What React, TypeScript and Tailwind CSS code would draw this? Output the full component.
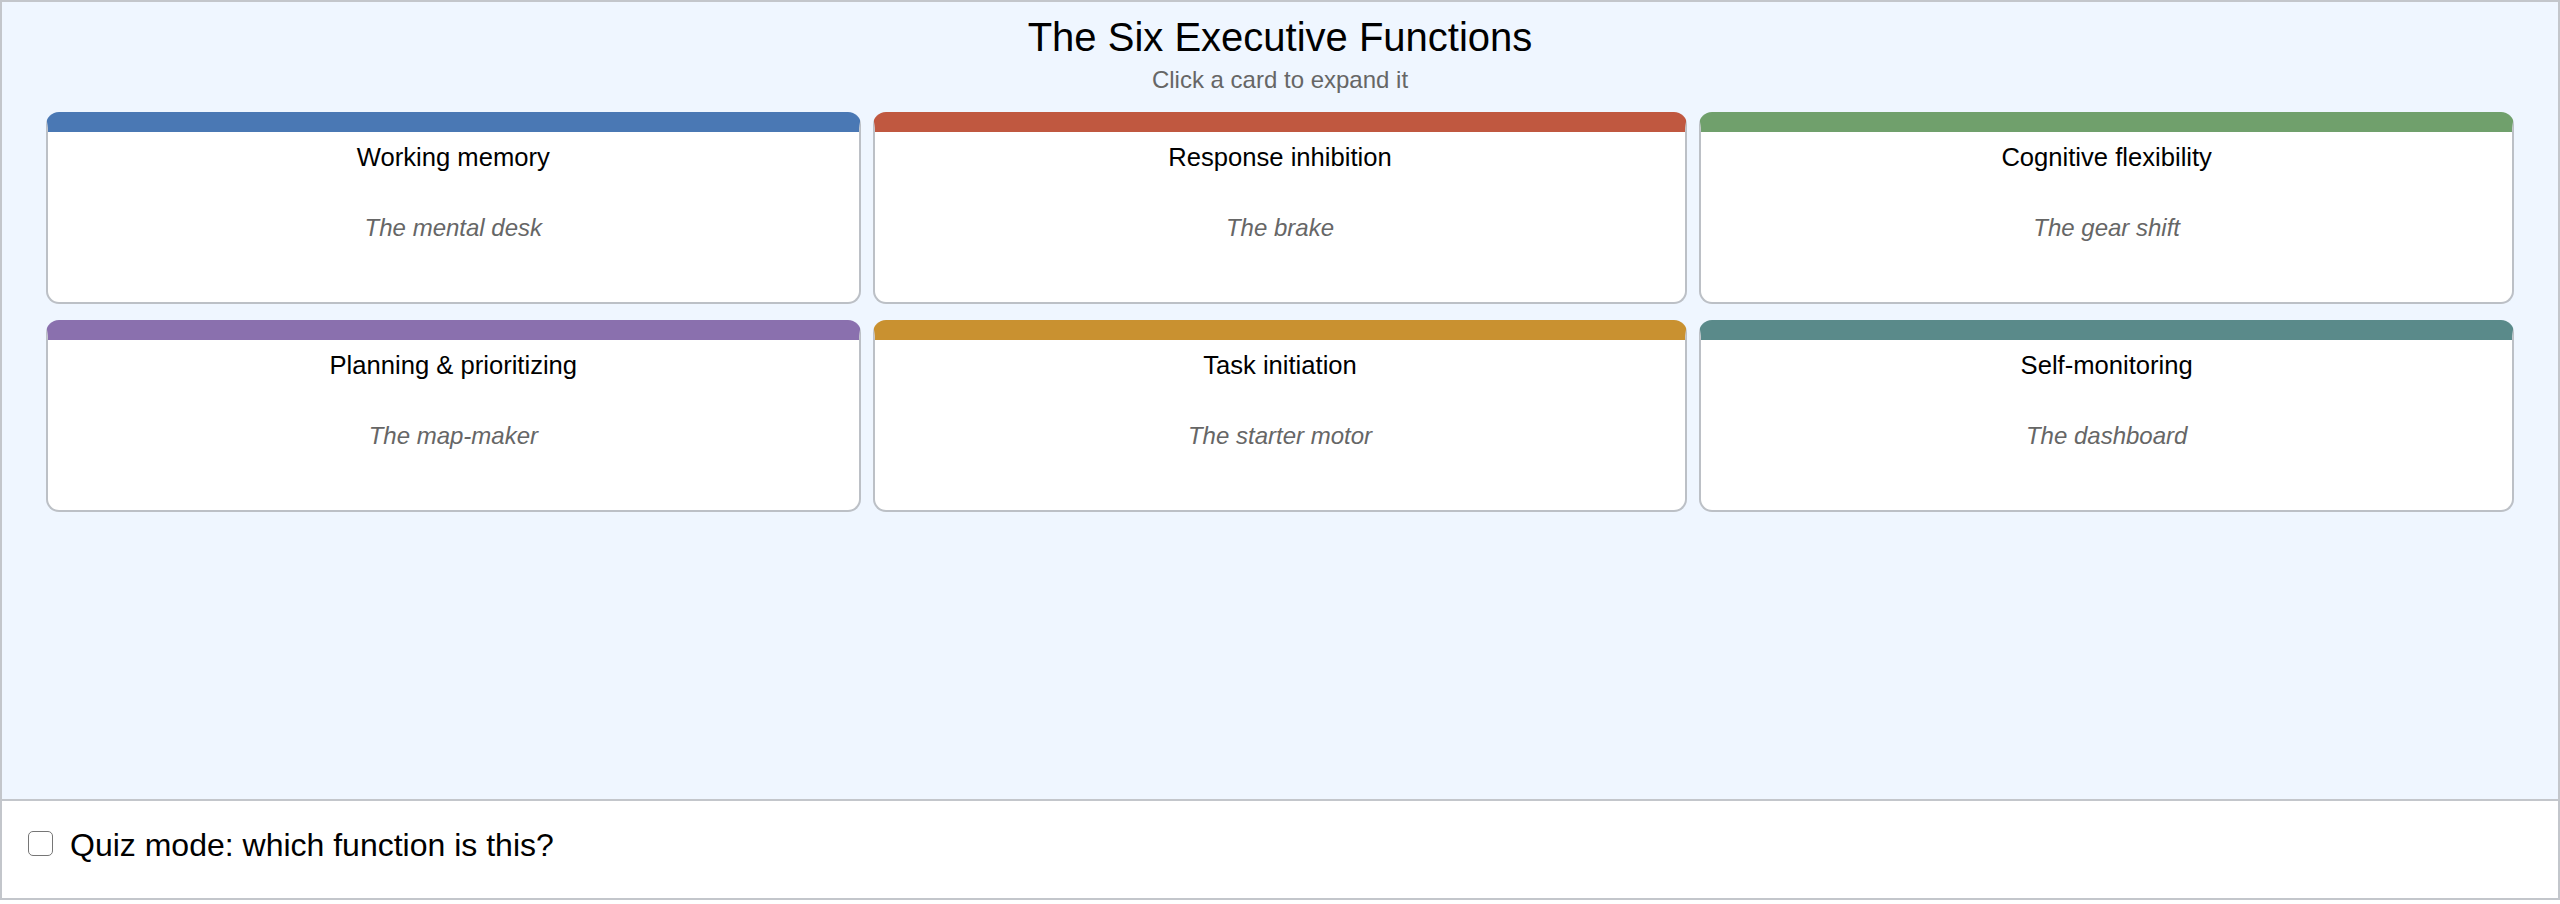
import React, { useState } from "react";

type Fn = {
  name: string;
  tagline: string;
  bar: string;
};

const FUNCTIONS: Fn[] = [
  { name: "Working memory", tagline: "The mental desk", bar: "border-t-[#4a78b4]" },
  { name: "Response inhibition", tagline: "The brake", bar: "border-t-[#c05840]" },
  { name: "Cognitive flexibility", tagline: "The gear shift", bar: "border-t-[#70a06c]" },
  { name: "Planning & prioritizing", tagline: "The map-maker", bar: "border-t-[#8a70ae]" },
  { name: "Task initiation", tagline: "The starter motor", bar: "border-t-[#c99130]" },
  { name: "Self-monitoring", tagline: "The dashboard", bar: "border-t-[#5a8a8a]" },
];

function Card({ fn, onToggle }: { fn: Fn; onToggle: () => void }) {
  return (
    <button
      type="button"
      onClick={onToggle}
      className={`h-[192px] flex flex-col items-center bg-white rounded-[13px] border-2 border-[#bcc0c6] border-t-[20px] ${fn.bar} pt-[11px] text-center cursor-pointer`}
    >
      <div className="text-[25.6px] leading-[29px] text-black">{fn.name}</div>
      <div className="mt-[42px] text-[24px] leading-[28px] italic text-[#666666]">{fn.tagline}</div>
    </button>
  );
}

export default function App() {
  const [open, setOpen] = useState<number | null>(null);
  const [quiz, setQuiz] = useState(false);

  return (
    <div
      className="h-[900px] flex flex-col border-2 border-[#c3c6cb] bg-white"
      style={{ fontFamily: '"Liberation Sans", Arial, Helvetica, sans-serif' }}
    >
      <div className="flex-1 bg-[#eff6ff] pt-[12px] px-[44px]">
        <h1 className="text-center text-[40px] leading-[46px] text-black">The Six Executive Functions</h1>
        <p className="mt-[6px] text-center text-[24px] leading-[28px] text-[#666666]">Click a card to expand it</p>
        <div className="mt-[18px] grid grid-cols-3 gap-x-[12px] gap-y-[16px]">
          {FUNCTIONS.map((fn, i) => (
            <Card key={fn.name} fn={fn} onToggle={() => setOpen(open === i ? null : i)} />
          ))}
        </div>
      </div>
      <div className="h-[99px] border-t-2 border-[#c3c6cb] bg-white pl-[26px] pt-[26px]">
        <label className="flex items-center gap-[17px] text-[32px] leading-[37px] text-black cursor-pointer">
          <input
            type="checkbox"
            checked={quiz}
            onChange={(e) => setQuiz(e.target.checked)}
            className="appearance-none w-[25px] h-[25px] -mt-[4px] rounded-[5px] border-[1.5px] border-[#767676] bg-white checked:bg-[#4a78b4]"
          />
          <span>Quiz mode: which function is this?</span>
        </label>
      </div>
    </div>
  );
}
